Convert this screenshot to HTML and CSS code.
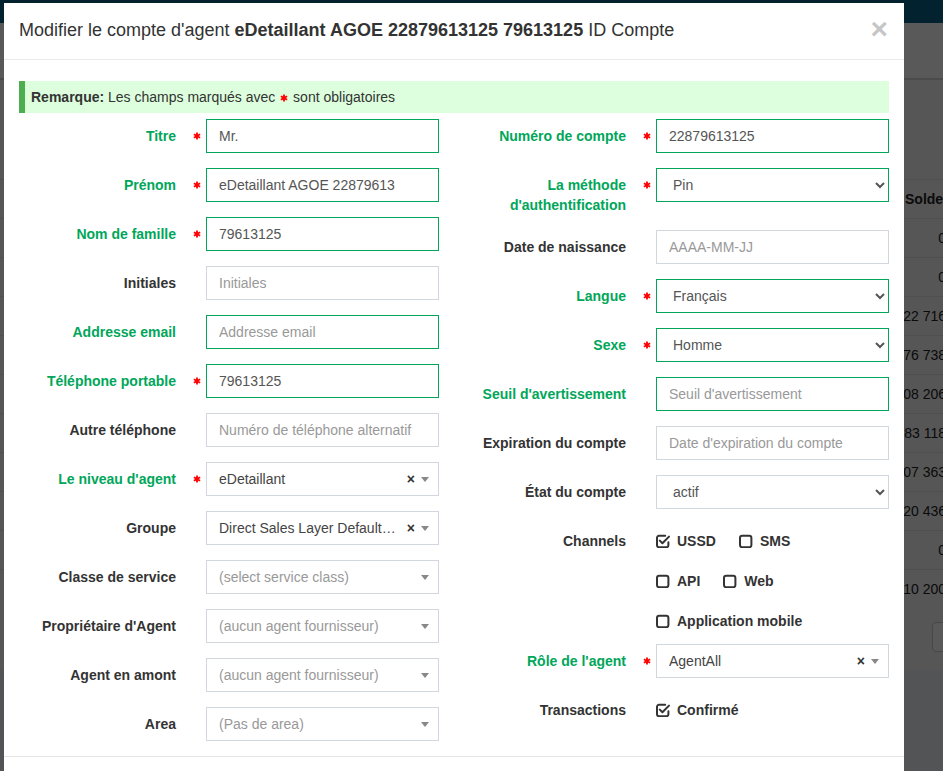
FILE: index.html
```html
<!DOCTYPE html>
<html lang="fr">
<head>
<meta charset="utf-8">
<title>Modifier le compte d'agent</title>
<link rel="stylesheet" href="styles.css">
</head>
<body>
<div class="page">
  <header class="navbar"></header>
  <div class="content-header"></div>
  <div class="content">
    <div class="box">
      <table class="bg-table">
        <thead><tr><th class="c-name">Nom</th><th class="c-solde">Solde</th></tr></thead>
        <tbody>
          <tr><td></td><td class="num"><div>0</div></td></tr>
          <tr><td></td><td class="num"><div>0</div></td></tr>
          <tr><td></td><td class="num"><div>1 122 716</div></td></tr>
          <tr><td></td><td class="num"><div>2 076 738</div></td></tr>
          <tr><td></td><td class="num"><div>1 508 206</div></td></tr>
          <tr><td></td><td class="num"><div>2 183 118</div></td></tr>
          <tr><td></td><td class="num"><div>1 807 363</div></td></tr>
          <tr><td></td><td class="num"><div>3 220 436</div></td></tr>
          <tr><td></td><td class="num"><div>0</div></td></tr>
          <tr><td></td><td class="num"><div>5 310 200</div></td></tr>
        </tbody>
      </table>
      <div class="pager"><span class="pager-btn"></span></div>
    </div>
  </div>
</div>
<div class="backdrop"></div>

<div class="modal">
  <div class="modal-header">
    <h4 class="modal-title">Modifier le compte d'agent <b>eDetaillant AGOE 22879613125 79613125</b> ID Compte</h4>
    <button class="close" type="button">&times;</button>
  </div>
  <div class="modal-body">
    <div class="alert"><b>Remarque:</b> Les champs marqués avec <svg class="ast-inline" viewBox="0 0 10 10"><path d="M5 .5v9M1.1 2.75l7.8 4.5M1.1 7.25l7.8-4.5"/></svg> sont obligatoires</div>
    <form class="form-grid">
      <div class="col">
        <div class="form-group has-success">
          <label class="control-label">Titre<svg class="ast" viewBox="0 0 10 10"><path d="M5 .5v9M1.1 2.75l7.8 4.5M1.1 7.25l7.8-4.5"/></svg></label>
          <input class="form-control" type="text" value="Mr.">
        </div>
        <div class="form-group has-success">
          <label class="control-label">Prénom<svg class="ast" viewBox="0 0 10 10"><path d="M5 .5v9M1.1 2.75l7.8 4.5M1.1 7.25l7.8-4.5"/></svg></label>
          <input class="form-control" type="text" value="eDetaillant AGOE 22879613">
        </div>
        <div class="form-group has-success">
          <label class="control-label">Nom de famille<svg class="ast" viewBox="0 0 10 10"><path d="M5 .5v9M1.1 2.75l7.8 4.5M1.1 7.25l7.8-4.5"/></svg></label>
          <input class="form-control" type="text" value="79613125">
        </div>
        <div class="form-group">
          <label class="control-label">Initiales</label>
          <input class="form-control" type="text" placeholder="Initiales">
        </div>
        <div class="form-group has-success">
          <label class="control-label">Addresse email</label>
          <input class="form-control" type="text" placeholder="Addresse email">
        </div>
        <div class="form-group has-success">
          <label class="control-label">Téléphone portable<svg class="ast" viewBox="0 0 10 10"><path d="M5 .5v9M1.1 2.75l7.8 4.5M1.1 7.25l7.8-4.5"/></svg></label>
          <input class="form-control" type="text" value="79613125">
        </div>
        <div class="form-group">
          <label class="control-label">Autre téléphone</label>
          <input class="form-control" type="text" placeholder="Numéro de téléphone alternatif">
        </div>
        <div class="form-group label-green">
          <label class="control-label">Le niveau d'agent<svg class="ast" viewBox="0 0 10 10"><path d="M5 .5v9M1.1 2.75l7.8 4.5M1.1 7.25l7.8-4.5"/></svg></label>
          <div class="select2"><span class="s2-text">eDetaillant</span><span class="s2-clear">&times;</span><span class="s2-arrow"></span></div>
        </div>
        <div class="form-group">
          <label class="control-label">Groupe</label>
          <div class="select2"><span class="s2-text">Direct Sales Layer Default Group</span><span class="s2-clear">&times;</span><span class="s2-arrow"></span></div>
        </div>
        <div class="form-group">
          <label class="control-label">Classe de service</label>
          <div class="select2"><span class="s2-text s2-ph">(select service class)</span><span class="s2-arrow"></span></div>
        </div>
        <div class="form-group">
          <label class="control-label">Propriétaire d'Agent</label>
          <div class="select2"><span class="s2-text s2-ph">(aucun agent fournisseur)</span><span class="s2-arrow"></span></div>
        </div>
        <div class="form-group">
          <label class="control-label">Agent en amont</label>
          <div class="select2"><span class="s2-text s2-ph">(aucun agent fournisseur)</span><span class="s2-arrow"></span></div>
        </div>
        <div class="form-group">
          <label class="control-label">Area</label>
          <div class="select2"><span class="s2-text s2-ph">(Pas de area)</span><span class="s2-arrow"></span></div>
        </div>
      </div>

      <div class="col">
        <div class="form-group has-success">
          <label class="control-label">Numéro de compte<svg class="ast" viewBox="0 0 10 10"><path d="M5 .5v9M1.1 2.75l7.8 4.5M1.1 7.25l7.8-4.5"/></svg></label>
          <input class="form-control" type="text" value="22879613125">
        </div>
        <div class="form-group has-success">
          <label class="control-label">La méthode d'authentification<svg class="ast" viewBox="0 0 10 10"><path d="M5 .5v9M1.1 2.75l7.8 4.5M1.1 7.25l7.8-4.5"/></svg></label>
          <select class="form-control"><option>Pin</option></select>
        </div>
        <div class="form-group">
          <label class="control-label">Date de naissance</label>
          <input class="form-control" type="text" placeholder="AAAA-MM-JJ">
        </div>
        <div class="form-group has-success">
          <label class="control-label">Langue<svg class="ast" viewBox="0 0 10 10"><path d="M5 .5v9M1.1 2.75l7.8 4.5M1.1 7.25l7.8-4.5"/></svg></label>
          <select class="form-control"><option>Français</option></select>
        </div>
        <div class="form-group has-success">
          <label class="control-label">Sexe<svg class="ast" viewBox="0 0 10 10"><path d="M5 .5v9M1.1 2.75l7.8 4.5M1.1 7.25l7.8-4.5"/></svg></label>
          <select class="form-control"><option>Homme</option></select>
        </div>
        <div class="form-group has-success">
          <label class="control-label">Seuil d'avertissement</label>
          <input class="form-control" type="text" placeholder="Seuil d'avertissement">
        </div>
        <div class="form-group">
          <label class="control-label">Expiration du compte</label>
          <input class="form-control" type="text" placeholder="Date d'expiration du compte">
        </div>
        <div class="form-group">
          <label class="control-label">État du compte</label>
          <select class="form-control"><option>actif</option></select>
        </div>
        <div class="form-group channels">
          <label class="control-label">Channels</label>
          <div class="checks">
            <div class="check-row">
              <span class="check"><svg class="cb" viewBox="0 0 14 14"><path d="M9.2 1.8H3a2 2 0 0 0-2 2v7.4a2 2 0 0 0 2 2h7.4a2 2 0 0 0 2-2V8.2"/><path d="M3.8 6.6l2.6 2.6L13 2.6"/></svg>USSD</span>
              <span class="check"><svg class="cb" viewBox="0 0 14 14"><rect x="1" y="1.8" width="11.4" height="11.4" rx="2.2"/></svg>SMS</span>
            </div>
            <div class="check-row">
              <span class="check"><svg class="cb" viewBox="0 0 14 14"><rect x="1" y="1.8" width="11.4" height="11.4" rx="2.2"/></svg>API</span>
              <span class="check"><svg class="cb" viewBox="0 0 14 14"><rect x="1" y="1.8" width="11.4" height="11.4" rx="2.2"/></svg>Web</span>
            </div>
            <div class="check-row">
              <span class="check"><svg class="cb" viewBox="0 0 14 14"><rect x="1" y="1.8" width="11.4" height="11.4" rx="2.2"/></svg>Application mobile</span>
            </div>
          </div>
        </div>
        <div class="form-group label-green">
          <label class="control-label">Rôle de l'agent<svg class="ast" viewBox="0 0 10 10"><path d="M5 .5v9M1.1 2.75l7.8 4.5M1.1 7.25l7.8-4.5"/></svg></label>
          <div class="select2"><span class="s2-text">AgentAll</span><span class="s2-clear">&times;</span><span class="s2-arrow"></span></div>
        </div>
        <div class="form-group">
          <label class="control-label">Transactions</label>
          <div class="checks">
            <div class="check-row">
              <span class="check"><svg class="cb" viewBox="0 0 14 14"><path d="M9.2 1.8H3a2 2 0 0 0-2 2v7.4a2 2 0 0 0 2 2h7.4a2 2 0 0 0 2-2V8.2"/><path d="M3.8 6.6l2.6 2.6L13 2.6"/></svg>Confirmé</span>
            </div>
          </div>
        </div>
      </div>
    </form>
  </div>
  <div class="modal-footer"></div>
</div>
</body>
</html>
```
FILE: styles.css
```css
* { box-sizing: border-box; }
html, body { margin: 0; height: 100%; overflow: hidden; }
body {
  font-family: "Liberation Sans", Arial, sans-serif;
  font-size: 14px;
  line-height: 20px;
  color: #333;
  background: #ecf0f5;
}

/* page behind the modal */
.page { height: 100%; display: flex; flex-direction: column; }
.navbar { height: 23px; background: #0a6188; flex: none; }
.content-header { height: 57px; background: #fff; border-bottom: 2px solid #d8d8d8; flex: none; }
.content { flex: 1; background: #ecf0f5; }
.box { background: #f7f7f7; padding-top: 99px; height: 590px; }
.bg-table { width: 954px; border-collapse: collapse; table-layout: fixed; }
.bg-table th, .bg-table td { height: 39px; padding: 0 8px; border-top: 1px solid #e2e2e2; font-size: 14px; color: #222; white-space: nowrap; }
.bg-table th { text-align: left; font-weight: bold; }
.bg-table .c-solde { width: 57px; overflow: visible; }
.bg-table .num > div { display: flex; justify-content: flex-end; }
.pager { display: flex; justify-content: flex-end; padding-top: 13px; }
.pager-btn { width: 30px; height: 30px; margin-right: -19px; border: 1px solid #ccc; border-radius: 4px; background: #fff; }

.backdrop { position: fixed; inset: 0; background: rgba(0, 0, 0, 0.65); }

/* modal */
.modal {
  position: absolute;
  left: 4px;
  top: 3px;
  width: 900px;
  background: #fff;
}
.modal-header {
  padding: 15px;
  border-bottom: 1px solid #e9e9e9;
  display: flex;
  justify-content: space-between;
  align-items: flex-start;
}
.modal-title {
  margin: 0;
  font-size: 18px;
  line-height: 1.42857;
  font-weight: normal;
  color: #333;
}
.modal-title b { font-weight: bold; }
.close {
  margin-top: -4px;
  margin-right: 1px;
  padding: 0;
  border: 0;
  background: none;
  font-family: "Liberation Sans", Arial, sans-serif;
  font-size: 30px;
  font-weight: bold;
  line-height: 1;
  color: #000;
  opacity: 0.22;
}
.modal-body { padding: 15px 15px 0; }
.modal-footer { border-top: 1px solid #e5e5e5; height: 60px; }

.alert {
  margin: 6px 0;
  padding: 6px;
  border-left: 6px solid #4cae50;
  background: #dfd;
  color: #333;
}
.ast-inline { width: 8px; height: 8px; margin: 0 1px; vertical-align: 0; fill: none; stroke: #f00; stroke-width: 2.3; }

/* form */
.form-grid {
  display: grid;
  grid-template-columns: 420px 420px;
  column-gap: 30px;
  margin: 0;
}
.col { display: flex; flex-direction: column; }
.form-group {
  display: grid;
  grid-template-columns: 157px 233px;
  column-gap: 30px;
  align-items: start;
  margin-bottom: 15px;
}
.control-label {
  position: relative;
  padding-top: 7px;
  text-align: right;
  font-weight: bold;
  color: #333;
}
.has-success .control-label, .label-green .control-label { color: #00a65a; }
.ast {
  position: absolute;
  right: -25px;
  top: 13px;
  width: 8px;
  height: 8px;
  fill: none;
  stroke: #f00;
  stroke-width: 2.3;
}

.form-control {
  display: block;
  width: 100%;
  height: 34px;
  margin: 0;
  padding: 6px 12px;
  font-family: "Liberation Sans", Arial, sans-serif;
  font-size: 14px;
  line-height: 20px;
  color: #555;
  background: #fff;
  border: 1px solid #d2d6de;
  border-radius: 0;
  outline: none;
}
.form-control::placeholder { color: #999; opacity: 1; }
.has-success .form-control { border-color: #00a65a; }

.select2 {
  display: flex;
  align-items: center;
  height: 34px;
  padding: 0 9px 0 12px;
  border: 1px solid #d2d6de;
  background: #fff;
}
.s2-text {
  flex: 1;
  min-width: 0;
  margin-right: 9px;
  white-space: nowrap;
  overflow: hidden;
  text-overflow: ellipsis;
  color: #444;
}
.s2-ph { color: #999; }
.s2-clear {
  margin-right: 6px;
  font-weight: bold;
  font-size: 14px;
  color: #333;
}
.s2-arrow {
  width: 0;
  height: 0;
  border-left: 4px solid transparent;
  border-right: 4px solid transparent;
  border-top: 5px solid #888;
}

.checks { display: flex; flex-direction: column; gap: 20px; padding-top: 7px; }
.channels { margin-bottom: 13px; }
.check-row { display: flex; gap: 23px; }
.check { display: flex; align-items: center; gap: 7px; font-weight: bold; color: #333; }
.cb { width: 14px; height: 14px; fill: none; stroke: #333; stroke-width: 2; stroke-linecap: round; stroke-linejoin: round; }
```
